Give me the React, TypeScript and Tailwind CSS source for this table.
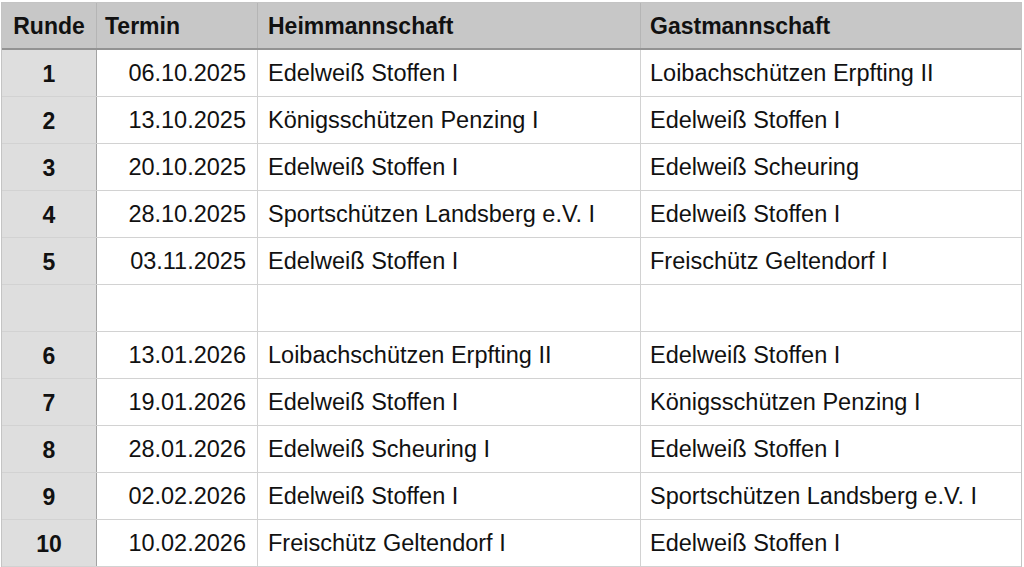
import React from "react";

const rows: [string, string, string, string][] = [
  ["1", "06.10.2025", "Edelweiß Stoffen I", "Loibachschützen Erpfting II"],
  ["2", "13.10.2025", "Königsschützen Penzing I", "Edelweiß Stoffen I"],
  ["3", "20.10.2025", "Edelweiß Stoffen I", "Edelweiß Scheuring"],
  ["4", "28.10.2025", "Sportschützen Landsberg e.V. I", "Edelweiß Stoffen I"],
  ["5", "03.11.2025", "Edelweiß Stoffen I", "Freischütz Geltendorf I"],
  ["", "", "", ""],
  ["6", "13.01.2026", "Loibachschützen Erpfting II", "Edelweiß Stoffen I"],
  ["7", "19.01.2026", "Edelweiß Stoffen I", "Königsschützen Penzing I"],
  ["8", "28.01.2026", "Edelweiß Scheuring I", "Edelweiß Stoffen I"],
  ["9", "02.02.2026", "Edelweiß Stoffen I", "Sportschützen Landsberg e.V. I"],
  ["10", "10.02.2026", "Freischütz Geltendorf I", "Edelweiß Stoffen I"],
];

export default function App() {
  return (
    <div
      className="w-[1024px] h-[567px] bg-white overflow-hidden pt-[2px] pl-[1px] text-[#111]"
      style={{ fontFamily: '"Liberation Sans", Arial, sans-serif' }}
    >
      <div className="w-[1021px] border-t border-l border-r border-[#c4c4c4]">
        <div className="grid grid-cols-[95px_161px_383px_381px] h-[47px] bg-[#c7c7c7] border-b-2 border-[#939393] text-[23px] font-bold">
          <div className="flex items-center justify-center pt-[1px] border-r border-[#b5b5b5]">Runde</div>
          <div className="flex items-center pl-[8px] pt-[1px] border-r border-[#b5b5b5]">Termin</div>
          <div className="flex items-center pl-[10px] pt-[1px] border-r border-[#b5b5b5]">Heimmannschaft</div>
          <div className="flex items-center pl-[9px] pt-[1px]">Gastmannschaft</div>
        </div>
        {rows.map((r, i) => (
          <div
            key={i}
            className="grid grid-cols-[95px_161px_383px_381px] h-[47px] border-b border-[#d2d2d2] text-[23.5px]"
          >
            <div className="flex items-center justify-center pt-[2px] bg-[#dedede] border-r border-[#a3a3a3] font-bold text-[23px]">
              {r[0]}
            </div>
            <div className="flex items-center justify-end pt-[2px] pr-[11px] border-r border-[#d2d2d2]">{r[1]}</div>
            <div className="flex items-center pl-[10px] pt-[2px] border-r border-[#d2d2d2]">{r[2]}</div>
            <div className="flex items-center pl-[9px] pt-[2px]">{r[3]}</div>
          </div>
        ))}
      </div>
    </div>
  );
}
